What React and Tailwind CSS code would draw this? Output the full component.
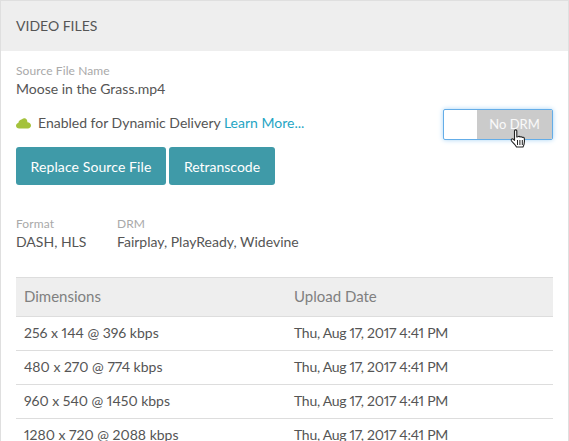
const rows = ['256 x 144 @ 396 kbps', '480 x 270 @ 774 kbps', '960 x 540 @ 1450 kbps', '1280 x 720 @ 2088 kbps'];

const Cloud = () => (
  <svg width="15" height="12" viewBox="0 0 15 12" className="shrink-0">
    <path d="M3.200 11.500C1.400 11.500 0 10.300 0 8.700c0-1.400 1-2.500 2.300-2.800C2.600 3.900 4.200 2.600 6 2.200 7.500.9 10 1 11 3c.3.9.4 1.600.4 2.300C13.400 5.400 15 6.800 15 8.600c0 1.700-1.400 2.900-3.100 2.900z" fill="#a4c23c" />
  </svg>
);

const HandCursor = () => (
  <svg width="17" height="21" viewBox="0 0 17 21" className="absolute left-[66px] top-[19px]">
    <path d="M4.500 1.800C4.500.5 6.800.5 6.800 1.800V8L8 7.700c.6-.5 1.700-.4 2 .3.600-.5 1.800-.4 2.100.4.700-.4 2-.2 2.200.8.300 2 .2 4.300-.2 6-.3 1.200-.7 2-1.100 2.800H6.500c-.6-1.100-1.300-2-2.300-3.100-.9-1-2-2.100-2.800-3.200-.8-1.200.7-2.500 1.900-1.500l1.200 1.100z" fill="#fff" stroke="#222" strokeWidth="1.100" strokeLinejoin="round" />
    <path d="M7.500 11v5M9.900 11v5M12.300 11v5" stroke="#222" strokeWidth="1" />
  </svg>
);

const Field = ({ label, value, className }) => (
  <div className={className}>
    <div className="text-[12px] leading-[18px] tracking-[0.1px] text-[#a9a9a9]">{label}</div>
    <div className="text-[14px] leading-[18px] text-[#555555]">{value}</div>
  </div>
);

export default function App() {
  return (
    <div className="h-[441px] w-[569px] overflow-hidden bg-white font-['Lato',sans-serif] proportional-nums">
      <div className="h-[460px] border-x border-t border-[#dfdfdf]">
        {/* Header */}
        <div className="flex h-[50px] items-center bg-[#eeeeee] pb-[1px] pl-[15px] text-[14px] text-[#555555]">
          VIDEO FILES
        </div>

        <div className="pl-[15px] pr-[15px] pt-[11px]">
          <Field label="Source File Name" value="Moose in the Grass.mp4" />

          <div className="mt-[8px] flex items-start justify-between">
            <div>
              <div className="flex h-[33px] items-center gap-[7px] text-[14px] text-[#555555]">
                <Cloud />
                <span>
                  Enabled for Dynamic Delivery <a className="text-[#1fa5c4]">Learn More...</a>
                </span>
              </div>
              <div className="mt-[8px] flex gap-[3px]">
                <button className="h-[38px] w-[150px] rounded-[3px] bg-[#3f9aa8] text-[14px] tracking-[0.1px] text-white">Replace Source File</button>
                <button className="h-[38px] w-[106px] rounded-[3px] bg-[#3f9aa8] text-[14px] text-white">Retranscode</button>
              </div>
            </div>

            {/* DRM toggle */}
            <div className="relative mt-[3px] flex h-[31px] w-[110px] rounded-[2px] border border-[#64ade8] bg-white shadow-[0_0_5px_#a9d4f5]">
              <div className="w-[33px]" />
              <div className="flex flex-1 items-center justify-center rounded-r-[1px] bg-[#cbcbcb] text-[13px] text-white/90">No DRM</div>
              <HandCursor />
            </div>
          </div>

          <div className="mt-[30px] flex">
            <Field label="Format" value="DASH, HLS" className="w-[101px]" />
            <Field label="DRM" value="Fairplay, PlayReady, Widevine" />
          </div>

          {/* Table */}
          <div className="mt-[26px] text-[14px] text-[#555555]">
            <div className="flex h-[40px] items-center border-y border-[#dddddd] bg-[#eeeeee] pb-[1px] text-[15px] text-[#808080]">
              <div className="w-[278px] pl-[8px]">Dimensions</div>
              <div>Upload Date</div>
            </div>
            {rows.map((r) => (
              <div key={r} className="flex h-[34px] items-center border-b border-[#dddddd] pb-[2px]">
                <div className="w-[278px] pl-[8px]">{r}</div>
                <div className="tracking-[-0.28px]">Thu, Aug 17, 2017 4:41 PM</div>
              </div>
            ))}
          </div>
        </div>
      </div>
    </div>
  );
}
